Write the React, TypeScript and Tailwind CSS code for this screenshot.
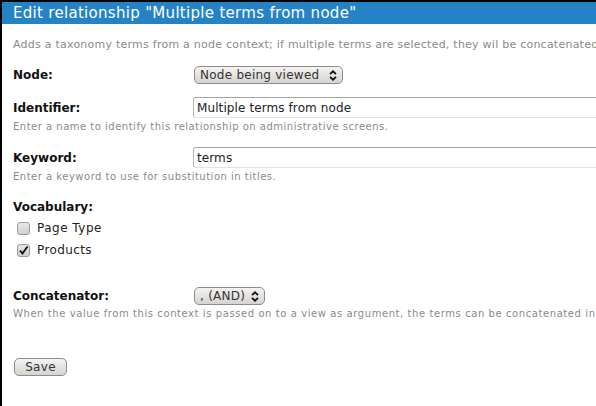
import React from "react";

function Arrows() {
  return (
    <svg width="8" height="11" viewBox="0 0 8 11" className="shrink-0">
      <path d="M1 4.2 L4 1.3 L7 4.2" fill="none" stroke="#111" strokeWidth="1.8" />
      <path d="M1 6.8 L4 9.7 L7 6.8" fill="none" stroke="#111" strokeWidth="1.8" />
    </svg>
  );
}

function Select({ text, w }: { text: string; w: string }) {
  return (
    <div
      className={`${w} h-[18px] flex items-center justify-between pl-[5px] pr-[5px] rounded-[5px] border border-[#8c8c8c] bg-gradient-to-b from-[#f4f3f1] to-[#d6d4d0] text-[12px] tracking-[0.25px] text-[#333] leading-none`}
    >
      <span>{text}</span>
      <Arrows />
    </div>
  );
}

function Input({ value }: { value: string }) {
  return (
    <div className="w-[500px] h-[21px] flex items-center pl-[3px] rounded-l-[3px] border border-[#b8b8b8] border-t-[#a4a4a4] border-b-[#e2e2e2] bg-white text-[12px] tracking-[0.1px] text-[#222] leading-none">
      {value}
    </div>
  );
}

function Checkbox({ checked }: { checked?: boolean }) {
  return (
    <div className="ml-[4px] w-[13px] h-[13px] rounded-[3px] border border-[#9a9a9a] bg-gradient-to-b from-[#e8e8e8] to-[#cfcfcf] flex items-center justify-center">
      {checked && (
        <svg width="11" height="11" viewBox="0 0 11 11">
          <path d="M2 5.5 L4.5 8.5 L9.5 1.5" fill="none" stroke="#111" strokeWidth="1.9" />
        </svg>
      )}
    </div>
  );
}

export default function App() {
  return (
    <div
      className="w-[596px] h-[406px] overflow-hidden bg-black pl-[2px] pt-[2px]"
      style={{ fontFamily: '"DejaVu Sans", Verdana, sans-serif' }}
    >
      <div className="bg-white h-full w-[720px]">
        <div className="h-[22px] bg-[#2583c5] text-white text-[15px] tracking-[0.3px] leading-[22px] pl-[11px] whitespace-nowrap">
          Edit relationship "Multiple terms from node"
        </div>
        <div className="pl-[11px] flex flex-col">
          <div className="mt-[14px] text-[11px] tracking-[0.24px] leading-[14px] text-[#8a8a8a] whitespace-nowrap">
            Adds a taxonomy terms from a node context; if multiple terms are selected, they wil be concatenated
          </div>

          <div className="mt-[14px] flex items-center h-[18px]">
            <div className="w-[181px] font-bold text-[12px] text-[#111]">Node:</div>
            <Select text="Node being viewed" w="w-[149px]" />
          </div>

          <div className="mt-[13px] flex items-center h-[21px]">
            <div className="w-[180px] font-bold text-[12px] text-[#111]">Identifier:</div>
            <Input value="Multiple terms from node" />
          </div>
          <div className="mt-[3px] text-[10px] tracking-[0.5px] leading-[12px] text-[#8a8a8a] whitespace-nowrap">
            Enter a name to identify this relationship on administrative screens.
          </div>

          <div className="mt-[14px] flex items-center h-[21px]">
            <div className="w-[180px] font-bold text-[12px] text-[#111]">Keyword:</div>
            <Input value="terms" />
          </div>
          <div className="mt-[3px] text-[10px] tracking-[0.5px] leading-[12px] text-[#8a8a8a] whitespace-nowrap">
            Enter a keyword to use for substitution in titles.
          </div>

          <div className="mt-[17px] font-bold text-[12px] leading-[15px] text-[#111]">Vocabulary:</div>
          <div className="mt-[4px] flex items-center h-[18px] gap-[7px] text-[12px] tracking-[0.5px] text-[#222]">
            <Checkbox />
            <span>Page Type</span>
          </div>
          <div className="mt-[4px] flex items-center h-[18px] gap-[7px] text-[12px] tracking-[0.4px] text-[#222]">
            <Checkbox checked />
            <span>Products</span>
          </div>

          <div className="mt-[28px] flex items-center h-[18px]">
            <div className="w-[181px] font-bold text-[12px] text-[#111]">Concatenator:</div>
            <Select text=", (AND)" w="w-[71px]" />
          </div>
          <div className="mt-[3px] text-[10px] tracking-[0.58px] leading-[12px] text-[#8a8a8a] whitespace-nowrap">
            When the value from this context is passed on to a view as argument, the terms can be concatenated in
          </div>

          <div className="mt-[38px] ml-[1px] w-[53px] h-[18px] rounded-[5px] border border-[#8c8c8c] bg-gradient-to-b from-[#f4f3f1] to-[#d6d4d0] flex items-center justify-center text-[12px] tracking-[0.3px] text-[#333]">
            Save
          </div>
        </div>
      </div>
    </div>
  );
}
